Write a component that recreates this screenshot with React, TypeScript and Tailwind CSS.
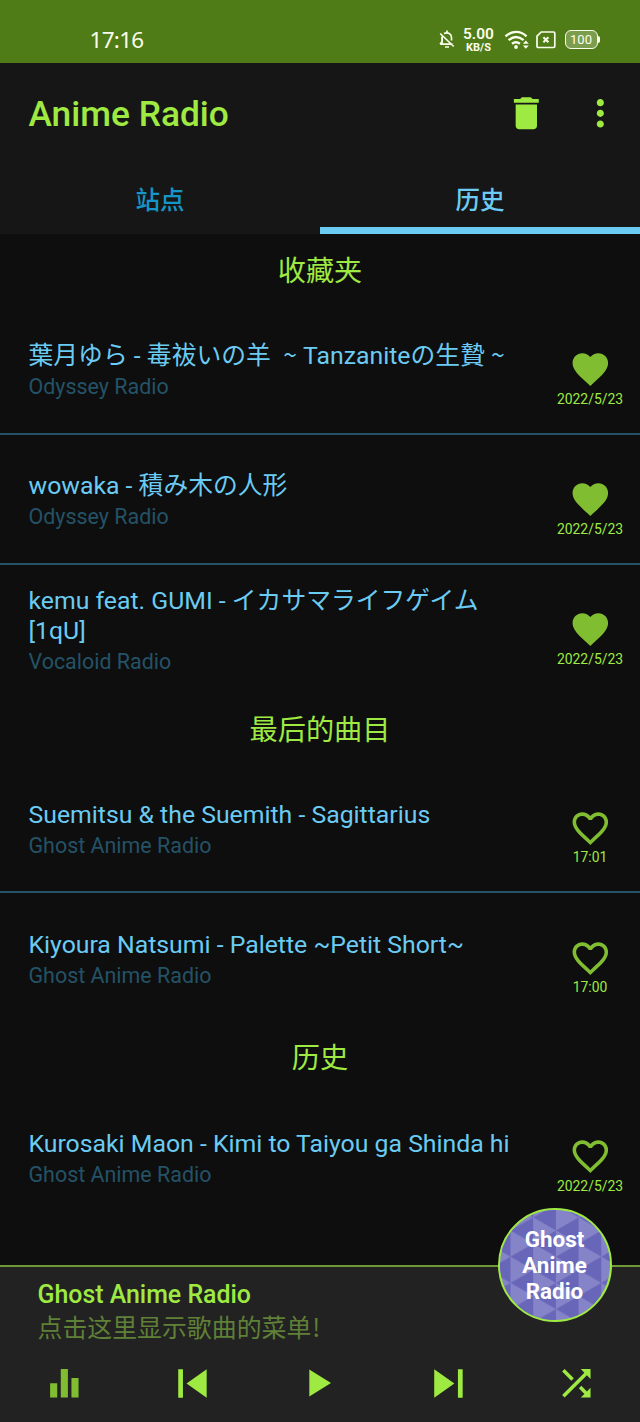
import { MdDelete, MdEqualizer, MdFavorite, MdFavoriteBorder, MdMoreVert, MdShuffle, MdSkipNext, MdSkipPrevious } from "react-icons/md";

type Track = { title: string; station: string; when: string; liked?: boolean; cjkTilde?: boolean };
type Section = { name: string; tracks: Track[] };

const sections: Section[] = [
  {
    name: "收藏夹",
    tracks: [
      { title: "葉月ゆら - 毒祓いの羊  ~ Tanzaniteの生贄 ~", station: "Odyssey Radio", when: "2022/5/23", liked: true, cjkTilde: true },
      { title: "wowaka - 積み木の人形", station: "Odyssey Radio", when: "2022/5/23", liked: true },
      { title: "kemu feat. GUMI - イカサマライフゲイム [1qU]", station: "Vocaloid Radio", when: "2022/5/23", liked: true },
    ],
  },
  {
    name: "最后的曲目",
    tracks: [
      { title: "Suemitsu & the Suemith - Sagittarius", station: "Ghost Anime Radio", when: "17:01" },
      { title: "Kiyoura Natsumi - Palette ~Petit Short~", station: "Ghost Anime Radio", when: "17:00" },
    ],
  },
  {
    name: "历史",
    tracks: [{ title: "Kurosaki Maon - Kimi to Taiyou ga Shinda hi", station: "Ghost Anime Radio", when: "2022/5/23" }],
  },
];

function StatusBar() {
  return (
    <div className="flex h-[63.3px] shrink-0 items-end bg-[#4f7c16] pr-[40.5px] pb-[9px] pl-[89.5px] text-[#fbfdec]">
      <span className="font-['Noto_Sans',sans-serif] text-[22.5px] leading-[28px] tracking-[-0.7px]">17:16</span>
      <div className="ml-auto flex h-[29px] items-center">
        <svg className="h-[19px] w-[16px]" viewBox="0 0 16 19" fill="none" stroke="currentColor" strokeWidth="1.7">
          <path d="M3 6.5V14M1 14.2h12.5M5 3.5C9 1.8 12.5 4 12.5 7.5v3M1.2 3.5l13.5 13M3.2 7v4.5L1 14" />
          <path d="M8 .5v2M6 17h4" />
        </svg>
        <div className="ml-[8px] flex w-[32px] flex-col items-center font-['Roboto',sans-serif]">
          <span className="text-[15.5px] leading-[15px] font-semibold">5.00</span>
          <span className="text-[11px] leading-[11px] font-bold">KB/S</span>
        </div>
        <svg className="ml-[9px] h-[20px] w-[25px]" viewBox="0 0 25 20" fill="none" stroke="currentColor" strokeWidth="2.4">
          <path d="M1.5 6.3C8 .4 16.5 .4 22.5 6.3M4.6 10.2c4.8-4.1 10.2-4.1 15 0M8 13.7c2.6-2 5.3-2 7.9 0" />
          <circle cx="12" cy="17" r="1.9" fill="currentColor" stroke="none" />
          <path d="M18.8 13.8l3-3.2 3 3.2zM18.8 15.6l3 3.2 3-3.2z" fill="currentColor" stroke="none" />
        </svg>
        <svg className="ml-[7px] h-[18px] w-[20px]" viewBox="0 0 20 18" fill="none" stroke="currentColor" strokeWidth="1.7">
          <path d="M5.2 1H17.5q1.3 0 1.3 1.3v12.900q0 1.300-1.300 1.300H2.300Q1 16.500 1 15.200V5.200z" />
          <path d="M7.400 6.300l5 5M12.400 6.300l-5 5" strokeWidth="2" />
        </svg>
        <div className="ml-[9px] flex h-[19px] w-[33px] items-center justify-center rounded-[6px] border-[1.6px] border-[#fbfdec] bg-[#7c9d4e] font-['Roboto',sans-serif] text-[13px] leading-none">100</div>
        <div className="h-[7px] w-[2px] rounded-r bg-[#fbfdec]" />
      </div>
    </div>
  );
}

function TrackTitle({ track }: { track: Track }) {
  if (!track.cjkTilde) return <>{track.title}</>;
  return (
    <>
      {track.title.split(/(~)/).map((part, i) =>
        part === "~" ? (
          <span key={i} className="font-['Noto_Sans_CJK_SC',sans-serif] leading-none">~</span>
        ) : (
          part
        ),
      )}
    </>
  );
}

function TrackRow({ track, divider }: { track: Track; divider: boolean }) {
  const Heart = track.liked ? MdFavorite : MdFavoriteBorder;
  return (
    <div className={divider ? "h-[130px] border-b-2 border-[#245266]" : "h-[128px]"}>
      <div className="flex h-full items-center">
        <div className="w-[540px] pt-[5px] pr-[20px] pl-[28.5px]">
          <div className="text-[24.8px] leading-[30px] whitespace-pre-wrap text-[#6bcbf2]">
            <TrackTitle track={track} />
          </div>
          <div className="mt-[2px] text-[21.45px] leading-[28px] text-[#245266]">{track.station}</div>
        </div>
        <div className="flex w-[100px] flex-col items-center pt-[18px]">
          <Heart className="size-[42.67px] text-[#80bd31]" />
          <div className="text-[13.9px] leading-[17px] text-[#9fea42]">{track.when}</div>
        </div>
      </div>
    </div>
  );
}

function StationBadge() {
  return (
    <div className="absolute top-[-59px] left-[497.5px] flex size-[114px] items-center justify-center overflow-hidden rounded-full border-2 border-[#9fea42] bg-[#8684c9]">
      <svg className="absolute inset-0 size-full" viewBox="0 0 110 110">
        <defs>
          <pattern id="tri" x="10.5" y="7.4" width="45.4" height="26.2" patternUnits="userSpaceOnUse">
            <path d="M0 13.1L22.7 0V26.2zM22.7 0L45.4 13.1V-13.1zM22.7 26.2L45.4 13.1V39.3z" fill="#6866b8" />
          </pattern>
        </defs>
        <rect width="110" height="110" fill="url(#tri)" />
      </svg>
      <div className="relative w-[80px] text-center text-[22.4px] leading-[26px] font-bold text-white">Ghost Anime Radio</div>
    </div>
  );
}

export default function App() {
  return (
    <div className="flex h-[1422px] w-[640px] flex-col overflow-hidden bg-[#0e0e0e] font-['Roboto','Noto_Sans_CJK_SC',sans-serif]">
      <StatusBar />
      <header className="flex h-[99.7px] shrink-0 items-center bg-[#161616] pl-[28.5px] text-[#9fea42]">
        <h1 className="mt-[3px] text-[35.3px] font-medium">Anime Radio</h1>
        <MdDelete className="ml-auto size-[42.67px]" />
        <MdMoreVert className="mr-[18px] ml-[32px] size-[42.67px]" />
      </header>
      <nav className="grid h-[71px] shrink-0 grid-cols-2 bg-[#161616] text-center text-[24.5px] leading-[30px] font-medium">
        <div className="h-[71px] pt-[23px] text-[#1596c8]">站点</div>
        <div className="h-[71px] border-b-[7px] border-[#6bcbf2] pt-[23px] text-[#6bcbf2]">历史</div>
      </nav>
      <main className="flex-1">
        {sections.map((s) => (
          <section key={s.name}>
            <h2 className="h-[70.7px] pt-[2px] text-center text-[28.2px] leading-[71px] text-[#9fea42]">{s.name}</h2>
            {s.tracks.map((t, i) => (
              <TrackRow key={t.title} track={t} divider={i < s.tracks.length - 1} />
            ))}
          </section>
        ))}
      </main>
      <footer className="relative h-[157px] shrink-0 border-t-2 border-[#6f9936] bg-[#222222]">
        <div className="pt-[13px] pl-[37.5px]">
          <div className="text-[24.9px] leading-[30px] font-medium text-[#9fea42]">Ghost Anime Radio</div>
          <div className="mt-[2px] h-[34px] text-[24.9px] leading-[34px] text-[#5f8036]">
            点击这里显示歌曲的菜单<span className="ml-[1px] font-['Noto_Sans_CJK_SC',sans-serif] leading-none">!</span>
          </div>
        </div>
        <div className="mt-[8.5px] grid h-[57px] grid-cols-5 place-items-center text-[#9fea42]">
          <MdEqualizer className="size-[42.67px] text-[#80bd31]" />
          <MdSkipPrevious className="size-[56.9px]" />
          <svg className="size-[42px]" viewBox="0 0 42 42" fill="currentColor">
            <path d="M10.300 7.500L32 21 10.300 34.500z" />
          </svg>
          <MdSkipNext className="size-[56.9px]" />
          <MdShuffle className="size-[42.67px]" />
        </div>
        <StationBadge />
      </footer>
    </div>
  );
}
